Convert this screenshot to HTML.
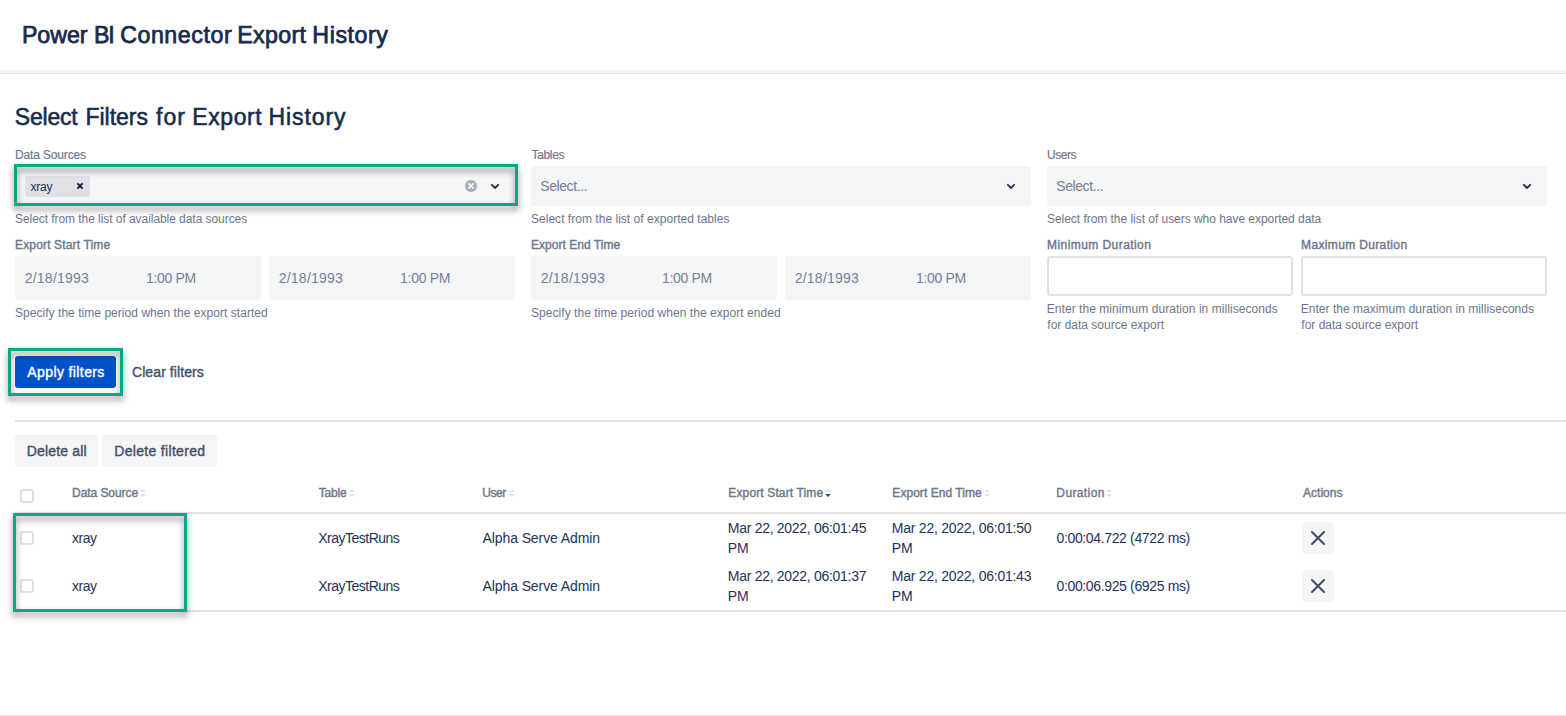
<!DOCTYPE html>
<html lang="en">
<head>
<meta charset="utf-8">
<title>Power BI Connector Export History</title>
<style>
html,body{margin:0;padding:0;background:#fff;}
body{width:1566px;height:716px;position:relative;overflow:hidden;font-family:"Liberation Sans",sans-serif;color:#172b4d;}
.t{position:absolute;white-space:nowrap;line-height:1;margin:0;padding:0;}
.box{position:absolute;box-sizing:border-box;}
.title{font-size:23.2px;color:#172b4d;-webkit-text-stroke:0.75px #172b4d;}
.h2{font-size:23px;color:#172b4d;-webkit-text-stroke:0.55px #172b4d;}
.lbl{font-size:12px;color:#6b778c;-webkit-text-stroke:0.4px #6b778c;}
.lbl2{font-size:12px;color:#6b778c;-webkit-text-stroke:0.15px #6b778c;}
.hlp{font-size:12px;color:#6b778c;}
.ph{font-size:14px;color:#74809a;}
.tag{font-size:12px;color:#21345a;}
.fld{background:#f4f5f7;border-radius:3px;}
.inp{background:#fff;border:2px solid #dfe1e6;border-radius:3px;}
.th{font-size:12px;color:#6b778c;-webkit-text-stroke:0.4px #6b778c;}
.td{font-size:14px;color:#21345a;}
.btn{font-size:14px;color:#42526e;-webkit-text-stroke:0.4px currentColor;}
.green{border:3px solid #04a986;filter:drop-shadow(0px 4px 3px rgba(0,0,0,.48));}
svg{position:absolute;overflow:visible;}
</style>
</head>
<body>
<!-- header -->
<div class="box" style="left:0;top:70px;width:1566px;height:3px;background:#f4f5f7;"></div>
<div class="box" style="left:0;top:73px;width:1566px;height:1px;background:#dfe1e6;"></div>
<!-- selects -->
<div class="box fld" style="left:15px;top:166px;width:500px;height:40px;"></div>
<div class="box fld" style="left:531px;top:166px;width:500px;height:40px;"></div>
<div class="box fld" style="left:1047px;top:166px;width:500px;height:40px;"></div>
<div class="box" style="left:25px;top:176px;width:65px;height:21px;background:#dfe1e6;border-radius:2px;"></div>
<!-- date fields -->
<div class="box fld" style="left:15px;top:256px;width:246px;height:43.5px;"></div>
<div class="box fld" style="left:269px;top:256px;width:246px;height:43.5px;"></div>
<div class="box fld" style="left:531px;top:256px;width:246px;height:43.5px;"></div>
<div class="box fld" style="left:785px;top:256px;width:246px;height:43.5px;"></div>
<div class="box inp" style="left:1047px;top:256px;width:246px;height:40px;"></div>
<div class="box inp" style="left:1301px;top:256px;width:246px;height:40px;"></div>
<!-- buttons -->
<div class="box" style="left:15px;top:356px;width:101px;height:32px;background:#0052cc;border-radius:3px;"></div>
<div class="box" style="left:15px;top:420px;width:1551px;height:2px;background:#dfe1e6;"></div>
<div class="box fld" style="left:15px;top:435px;width:83px;height:32px;"></div>
<div class="box fld" style="left:102px;top:435px;width:115px;height:32px;"></div>
<!-- table -->
<div class="box" style="left:15px;top:512px;width:1551px;height:2px;background:#dfe1e6;"></div>
<div class="box" style="left:15px;top:610px;width:1551px;height:2px;background:#dfe1e6;"></div>
<div class="box" style="left:0;top:715px;width:1566px;height:1px;background:#dfe1e6;"></div>
<!-- tag remove -->
<svg style="left:76px;top:182px;" width="8" height="8" viewBox="0 0 8 8"><path d="M1.4 1.4 L6.6 6.6 M6.6 1.4 L1.4 6.6" stroke="#0b1a3a" stroke-width="1.7" fill="none"/></svg>
<!-- clear indicator -->
<svg style="left:465px;top:180px;" width="12" height="12" viewBox="0 0 12 12"><circle cx="6" cy="6" r="6" fill="#a5adba"/><path d="M3.7 3.7 L8.3 8.3 M8.3 3.7 L3.7 8.3" stroke="#fff" stroke-width="1.6" stroke-linecap="round" fill="none"/></svg>
<!-- chevrons -->
<svg style="left:490px;top:183px;" width="10" height="7" viewBox="0 0 10 7"><path d="M1.9 1.9 L5 5 L8.1 1.9" stroke="#2a3b5b" stroke-width="2" stroke-linecap="round" stroke-linejoin="round" fill="none"/></svg>
<svg style="left:1006px;top:183px;" width="10" height="7" viewBox="0 0 10 7"><path d="M1.9 1.9 L5 5 L8.1 1.9" stroke="#2a3b5b" stroke-width="2" stroke-linecap="round" stroke-linejoin="round" fill="none"/></svg>
<svg style="left:1522px;top:183px;" width="10" height="7" viewBox="0 0 10 7"><path d="M1.9 1.9 L5 5 L8.1 1.9" stroke="#2a3b5b" stroke-width="2" stroke-linecap="round" stroke-linejoin="round" fill="none"/></svg>
<!-- checkboxes -->
<div class="box" style="left:20px;top:489px;width:14px;height:14px;border:2px solid #dddee4;border-radius:3px;background:#fff;"></div>
<div class="box" style="left:20px;top:531px;width:14px;height:14px;border:2px solid #e0e1e6;border-radius:3px;background:#fff;"></div>
<div class="box" style="left:20px;top:579px;width:14px;height:14px;border:2px solid #e0e1e6;border-radius:3px;background:#fff;"></div>
<!-- sort icons -->
<svg style="left:140px;top:489px;" width="6" height="8" viewBox="0 0 6 8"><path d="M0 3 L3 0 L6 3 Z" fill="#dfe1e6"/><path d="M0 5 L3 8 L6 5 Z" fill="#dfe1e6"/></svg>
<svg style="left:348.5px;top:489px;" width="6" height="8" viewBox="0 0 6 8"><path d="M0 3 L3 0 L6 3 Z" fill="#dfe1e6"/><path d="M0 5 L3 8 L6 5 Z" fill="#dfe1e6"/></svg>
<svg style="left:508.5px;top:489px;" width="6" height="8" viewBox="0 0 6 8"><path d="M0 3 L3 0 L6 3 Z" fill="#dfe1e6"/><path d="M0 5 L3 8 L6 5 Z" fill="#dfe1e6"/></svg>
<svg style="left:825px;top:489px;" width="6" height="8" viewBox="0 0 6 8"><path d="M0 3 L3 0 L6 3 Z" fill="#dfe1e6"/><path d="M0 5 L3 8 L6 5 Z" fill="#42526e"/></svg>
<svg style="left:984px;top:489px;" width="6" height="8" viewBox="0 0 6 8"><path d="M0 3 L3 0 L6 3 Z" fill="#dfe1e6"/><path d="M0 5 L3 8 L6 5 Z" fill="#dfe1e6"/></svg>
<svg style="left:1106px;top:489px;" width="6" height="8" viewBox="0 0 6 8"><path d="M0 3 L3 0 L6 3 Z" fill="#dfe1e6"/><path d="M0 5 L3 8 L6 5 Z" fill="#dfe1e6"/></svg>
<!-- action buttons -->
<div class="box fld" style="left:1302px;top:522px;width:32px;height:32px;"></div>
<div class="box fld" style="left:1302px;top:570px;width:32px;height:32px;"></div>
<svg style="left:1310px;top:530px;" width="16" height="16" viewBox="0 0 16 16"><path d="M2 2 L14 14 M14 2 L2 14" stroke="#3b4b69" stroke-width="2" stroke-linecap="round" fill="none"/></svg>
<svg style="left:1310px;top:578px;" width="16" height="16" viewBox="0 0 16 16"><path d="M2 2 L14 14 M14 2 L2 14" stroke="#3b4b69" stroke-width="2" stroke-linecap="round" fill="none"/></svg>

<!-- text -->
<div class="t title" id="t0" style="left:21.88px;top:24.00px;letter-spacing:-0.035px;">Power</div>
<div class="t title" id="t1" style="left:93.88px;top:24.00px;letter-spacing:-1.210px;">BI</div>
<div class="t title" id="t2" style="left:120.16px;top:24.00px;letter-spacing:0.558px;">Connector</div>
<div class="t title" id="t3" style="left:237.26px;top:24.00px;letter-spacing:0.346px;">Export</div>
<div class="t title" id="t4" style="left:312.33px;top:24.00px;letter-spacing:0.582px;">History</div>
<div class="t h2" id="t5" style="left:14.86px;top:106.00px;letter-spacing:-0.204px;">Select</div>
<div class="t h2" id="t6" style="left:85.52px;top:106.00px;letter-spacing:-0.029px;">Filters</div>
<div class="t h2" id="t7" style="left:155.99px;top:106.00px;letter-spacing:1.065px;">for</div>
<div class="t h2" id="t8" style="left:192.34px;top:106.00px;letter-spacing:0.561px;">Export</div>
<div class="t h2" id="t9" style="left:268.62px;top:106.00px;letter-spacing:0.895px;">History</div>
<div class="t lbl2" id="t10" style="left:15.06px;top:149.00px;letter-spacing:-0.156px;">Data Sources</div>
<div class="t lbl2" id="t11" style="left:531.49px;top:149.00px;letter-spacing:-0.323px;">Tables</div>
<div class="t lbl2" id="t12" style="left:1047.07px;top:149.00px;letter-spacing:-0.503px;">Users</div>
<div class="t tag" id="t13" style="left:30.43px;top:181.00px;letter-spacing:-0.188px;">xray</div>
<div class="t ph" id="t14" style="left:540.21px;top:179.00px;letter-spacing:-0.407px;">Select...</div>
<div class="t ph" id="t15" style="left:1056.21px;top:179.00px;letter-spacing:-0.407px;">Select...</div>
<div class="t hlp" id="t16" style="left:14.99px;top:213.00px;letter-spacing:-0.057px;">Select from the list of available data sources</div>
<div class="t hlp" id="t17" style="left:530.99px;top:213.00px;letter-spacing:0.027px;">Select from the list of exported tables</div>
<div class="t hlp" id="t18" style="left:1046.99px;top:213.00px;letter-spacing:-0.036px;">Select from the list of users who have exported data</div>
<div class="t lbl" id="t19" style="left:15.05px;top:239.00px;letter-spacing:0.149px;">Export Start Time</div>
<div class="t lbl" id="t20" style="left:531.06px;top:239.00px;letter-spacing:0.027px;">Export End Time</div>
<div class="t lbl" id="t21" style="left:1047.06px;top:239.00px;letter-spacing:0.433px;">Minimum Duration</div>
<div class="t lbl" id="t22" style="left:1301.06px;top:239.00px;letter-spacing:0.355px;">Maximum Duration</div>
<div class="t ph" id="t23" style="left:24.71px;top:271.00px;letter-spacing:0.236px;">2/18/1993</div>
<div class="t ph" id="t24" style="left:146.00px;top:271.00px;letter-spacing:-0.317px;">1:00 PM</div>
<div class="t ph" id="t25" style="left:278.71px;top:271.00px;letter-spacing:0.236px;">2/18/1993</div>
<div class="t ph" id="t26" style="left:400.00px;top:271.00px;letter-spacing:-0.270px;">1:00 PM</div>
<div class="t ph" id="t27" style="left:540.71px;top:271.00px;letter-spacing:0.236px;">2/18/1993</div>
<div class="t ph" id="t28" style="left:662.00px;top:271.00px;letter-spacing:-0.317px;">1:00 PM</div>
<div class="t ph" id="t29" style="left:794.71px;top:271.00px;letter-spacing:0.236px;">2/18/1993</div>
<div class="t ph" id="t30" style="left:916.00px;top:271.00px;letter-spacing:-0.317px;">1:00 PM</div>
<div class="t hlp" id="t31" style="left:14.99px;top:307.00px;letter-spacing:0.042px;">Specify the time period when the export started</div>
<div class="t hlp" id="t32" style="left:530.99px;top:307.00px;letter-spacing:0.050px;">Specify the time period when the export ended</div>
<div class="t hlp" id="t33" style="left:1046.77px;top:303.00px;letter-spacing:0.052px;">Enter the minimum duration in milliseconds</div>
<div class="t hlp" id="t34" style="left:1047.35px;top:319.00px;letter-spacing:-0.004px;">for data source export</div>
<div class="t hlp" id="t35" style="left:1300.77px;top:303.00px;letter-spacing:0.028px;">Enter the maximum duration in milliseconds</div>
<div class="t hlp" id="t36" style="left:1301.35px;top:319.00px;letter-spacing:-0.004px;">for data source export</div>
<div class="t btn" id="t37" style="left:27.33px;top:365.00px;letter-spacing:0.390px;color:#fff;">Apply filters</div>
<div class="t btn" id="t38" style="left:131.97px;top:365.00px;letter-spacing:0.092px;">Clear filters</div>
<div class="t btn" id="t39" style="left:26.78px;top:444.00px;letter-spacing:0.174px;">Delete all</div>
<div class="t btn" id="t40" style="left:114.29px;top:444.00px;letter-spacing:0.313px;">Delete filtered</div>
<div class="t th" id="t41" style="left:72.05px;top:487.00px;letter-spacing:-0.062px;">Data Source</div>
<div class="t th" id="t42" style="left:318.75px;top:487.00px;letter-spacing:-0.196px;">Table</div>
<div class="t th" id="t43" style="left:482.33px;top:487.00px;letter-spacing:-0.483px;">User</div>
<div class="t th" id="t44" style="left:728.35px;top:487.00px;letter-spacing:0.130px;">Export Start Time</div>
<div class="t th" id="t45" style="left:892.35px;top:487.00px;letter-spacing:0.044px;">Export End Time</div>
<div class="t th" id="t46" style="left:1056.35px;top:487.00px;letter-spacing:0.379px;">Duration</div>
<div class="t th" id="t47" style="left:1303.00px;top:487.00px;letter-spacing:0.022px;">Actions</div>
<div class="t td" id="t48" style="left:72.08px;top:531.00px;letter-spacing:-0.527px;">xray</div>
<div class="t td" id="t49" style="left:318.30px;top:531.00px;letter-spacing:-0.513px;">XrayTestRuns</div>
<div class="t td" id="t50" style="left:482.47px;top:531.00px;letter-spacing:-0.090px;">Alpha Serve Admin</div>
<div class="t td" id="t51" style="left:727.84px;top:521.00px;letter-spacing:-0.291px;">Mar 22, 2022, 06:01:45</div>
<div class="t td" id="t52" style="left:727.84px;top:541.00px;letter-spacing:-0.165px;">PM</div>
<div class="t td" id="t53" style="left:891.84px;top:521.00px;letter-spacing:-0.245px;">Mar 22, 2022, 06:01:50</div>
<div class="t td" id="t54" style="left:891.84px;top:541.00px;letter-spacing:-0.165px;">PM</div>
<div class="t td" id="t55" style="left:1056.51px;top:531.00px;letter-spacing:-0.356px;">0:00:04.722 (4722 ms)</div>
<div class="t td" id="t56" style="left:72.08px;top:579.00px;letter-spacing:-0.527px;">xray</div>
<div class="t td" id="t57" style="left:318.30px;top:579.00px;letter-spacing:-0.513px;">XrayTestRuns</div>
<div class="t td" id="t58" style="left:482.47px;top:579.00px;letter-spacing:-0.090px;">Alpha Serve Admin</div>
<div class="t td" id="t59" style="left:727.84px;top:569.00px;letter-spacing:-0.291px;">Mar 22, 2022, 06:01:37</div>
<div class="t td" id="t60" style="left:727.84px;top:589.00px;letter-spacing:-0.165px;">PM</div>
<div class="t td" id="t61" style="left:891.84px;top:569.00px;letter-spacing:-0.246px;">Mar 22, 2022, 06:01:43</div>
<div class="t td" id="t62" style="left:891.84px;top:589.00px;letter-spacing:-0.165px;">PM</div>
<div class="t td" id="t63" style="left:1056.51px;top:579.00px;letter-spacing:-0.356px;">0:00:06.925 (6925 ms)</div>
<!-- annotations -->
<div class="box green" style="left:14px;top:164px;width:504px;height:42px;"></div>
<div class="box green" style="left:8px;top:348px;width:115px;height:48px;"></div>
<div class="box green" style="left:13px;top:513px;width:174px;height:99px;"></div>

</body>
</html>
